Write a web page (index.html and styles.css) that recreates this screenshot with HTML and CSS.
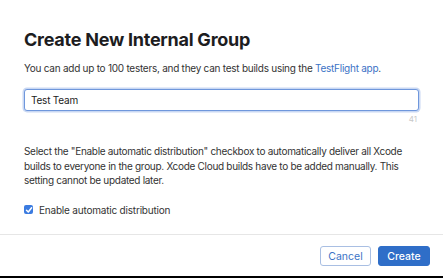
FILE: index.html
```html
<!DOCTYPE html>
<html lang="en">
<head>
  <meta charset="UTF-8" />
  <meta name="viewport" content="width=device-width, initial-scale=1.0" />
  <title>Create New Internal Group</title>
  <link rel="stylesheet" href="styles.css">
</head>
<body>

  <div class="dialog">
    <div class="dialog-body">
      <h1>Create New Internal Group</h1>
      <p class="intro">You can add up to 100 testers, and they can test builds using the <a href="#">TestFlight app</a>.</p>

      <div class="field">
        <input type="text" class="name-input" value="Test Team" />
        <div class="counter">41</div>
      </div>

      <p class="note">Select the "Enable automatic distribution" checkbox to automatically deliver all Xcode builds to everyone in the group. Xcode Cloud builds have to be added manually. This setting cannot be updated later.</p>

      <label class="check">
        <span class="box">
          <svg width="8" height="8" viewBox="0 0 8 8"><path d="M1.5 4.2 L3.3 6 L6.6 1.8" fill="none" stroke="#fff" stroke-width="1.5" stroke-linecap="round" stroke-linejoin="round"/></svg>
        </span>
        Enable automatic distribution
      </label>
    </div>

    <div class="dialog-footer">
      <button class="btn btn-secondary">Cancel</button>
      <button class="btn btn-primary">Create</button>
    </div>
  </div>

</body>
</html>
```

FILE: styles.css
```css
* {
  box-sizing: border-box;
  margin: 0;
  padding: 0;
  font-family: 'Inter', 'Helvetica Neue', sans-serif;
}

body {
  background: #000;
  color: #333;
}

.dialog {
  background: #fff;
  height: 276px;
  display: flex;
  flex-direction: column;
}

.dialog-body {
  flex: 1;
  padding: 29px 24px 0;
}

h1 {
  font-size: 18px;
  font-weight: 700;
  color: #1d1d1f;
  line-height: 22px;
  letter-spacing: -0.25px;
}

.intro {
  margin-top: 10px;
  font-size: 10px;
  line-height: 14px;
  letter-spacing: -0.25px;
  color: #333;
}

.intro a {
  color: #3b73c6;
  text-decoration: none;
}

.field {
  margin-top: 14px;
}

.name-input {
  display: block;
  width: 100%;
  height: 22px;
  padding: 0 6px;
  border: 1px solid #6f97dc;
  border-radius: 3px;
  box-shadow: 0 0 0 1.5px #c9d8f3;
  font-family: 'Inter', 'Helvetica Neue', sans-serif;
  font-size: 10px;
  letter-spacing: -0.2px;
  color: #222;
  outline: none;
}

.counter {
  text-align: right;
  font-size: 8px;
  color: #c8c8c8;
  margin-top: 3px;
  padding-right: 2px;
}

.note {
  margin-top: 20px;
  font-size: 10px;
  line-height: 14.5px;
  letter-spacing: -0.3px;
  color: #333;
}

.check {
  display: flex;
  align-items: center;
  gap: 6px;
  margin-top: 16px;
  font-size: 10px;
  letter-spacing: -0.2px;
  color: #333;
}

.box {
  width: 9px;
  height: 9px;
  border-radius: 2px;
  background: #3b7be0;
  display: flex;
  align-items: center;
  justify-content: center;
}

.dialog-footer {
  border-top: 1px solid #e6e6e6;
  display: flex;
  justify-content: flex-end;
  gap: 7px;
  padding: 11px 13px 10px;
}

.btn {
  height: 20px;
  padding: 0;
  font-family: 'Inter', 'Helvetica Neue', sans-serif;
  font-size: 10.5px;
  border-radius: 3px;
  cursor: pointer;
}

.btn-secondary {
  width: 51px;
  background: #fff;
  color: #3b73c6;
  border: 1px solid #a9bfe3;
}

.btn-primary {
  width: 52px;
  background: #2f6ec8;
  color: #fff;
  border: 1px solid #2f6ec8;
  font-weight: 500;
}
```
